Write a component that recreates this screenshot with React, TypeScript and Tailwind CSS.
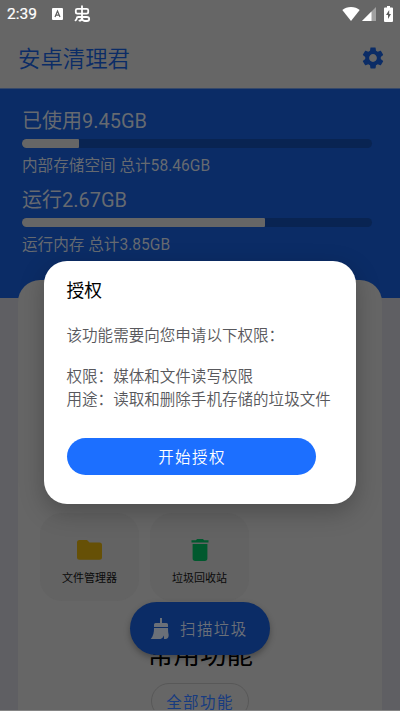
import React from "react";

function StatusBar() {
  return (
    <div className="flex h-7 items-center pl-[7px] pr-[7px] text-white">
      <span className="w-[31px] text-[15.5px] leading-7 [-webkit-text-stroke:0.2px_white]">2:39</span>
      <svg className="ml-[14px]" width="11" height="12" viewBox="0 0 11 12">
        <rect width="11" height="12" rx="1" fill="#fff" />
        <path d="M3 9 5.5 3 8 9M3.9 7.2H7.1" fill="none" stroke="#5c5c5c" strokeWidth="1.2" />
      </svg>
      <svg className="ml-[11px]" width="17" height="18" viewBox="0 0 17 18" fill="none" stroke="#fff" strokeWidth="1.8" strokeLinecap="round" strokeLinejoin="round">
        <path d="M3.4 3.8H12.6Q14.2 3.8 14.2 5.2V7Q14.2 8.6 12.6 8.6H3.4Q1.8 8.6 1.8 7V5.2Q1.8 3.8 3.4 3.8ZM8 1.2V12.5Q8 16 10.8 16H12.8Q15.2 16 15.2 14Q15.2 12 12.8 12H4.2Q2.8 12 2.8 13.2Q2.8 14.2 1.5 15.4M5.4 15.7Q7.6 15.5 8 13" />
      </svg>
      <div className="grow" />
      <svg width="18" height="14" viewBox="0 0 18 14">
        <path d="M9 14 0.3 3.1Q3.8 0 9 0T17.7 3.1Z" fill="#fff" />
      </svg>
      <svg className="ml-[2px]" width="14" height="14" viewBox="0 0 14 14">
        <path d="M14 0V14H0Z" fill="#a0a0a0" />
        <path d="M9.5 4.5V14H0Z" fill="#fff" />
      </svg>
      <svg className="ml-2" width="9" height="16" viewBox="0 0 9 16">
        <path d="M3 0H6V1.5H8Q9 1.5 9 2.5V15Q9 16 8 16H1Q0 16 0 15V2.5Q0 1.5 1 1.5H3Z" fill="#fff" />
        <path d="M5.2 4 2 9H4V13L7 8H5.2Z" fill="#5c5c5c" />
      </svg>
    </div>
  );
}

function GearIcon() {
  return (
    <svg width="26" height="26" viewBox="0 0 24 24" fill="#0b2c66">
      <path d="M19.14 12.94c.04-.3.06-.61.06-.94 0-.32-.02-.64-.07-.94l2.03-1.58c.18-.14.23-.41.12-.61l-1.92-3.32c-.12-.22-.37-.29-.59-.22l-2.39.96c-.5-.38-1.03-.7-1.62-.94l-.36-2.54c-.04-.24-.24-.41-.48-.41h-3.84c-.24 0-.43.17-.47.41l-.36 2.54c-.59.24-1.13.57-1.62.94l-2.39-.96c-.22-.08-.47 0-.59.22L2.74 8.87c-.12.21-.08.47.12.61l2.03 1.58c-.05.3-.09.63-.09.94s.02.64.07.94l-2.03 1.58c-.18.14-.23.41-.12.61l1.92 3.32c.12.22.37.29.59.22l2.39-.96c.5.38 1.03.7 1.62.94l.36 2.54c.05.24.24.41.48.41h3.84c.24 0 .44-.17.47-.41l.36-2.54c.59-.24 1.13-.56 1.62-.94l2.39.96c.22.08.47 0 .59-.22l1.92-3.32c.12-.22.07-.47-.12-.61l-2.01-1.58zM12 15.6c-1.98 0-3.6-1.62-3.6-3.6s1.62-3.6 3.6-3.6 3.6 1.62 3.6 3.6-1.62 3.6-3.6 3.6z" />
    </svg>
  );
}

function Meter({ title, detail, width }: { title: string; detail: string; width: number }) {
  return (
    <div className="h-[79px]">
      <div className="h-[31px] text-[20px] leading-[26px]">{title}</div>
      <div className="h-[9px] w-[350px] overflow-hidden rounded-full bg-[#092452]">
        <div className="h-full rounded-r-[1px] bg-[#666]" style={{ width }} />
      </div>
      <div className="mt-[7px] text-[15.6px] leading-[22px]">{detail}</div>
    </div>
  );
}

function Tile({ icon, label }: { icon: React.ReactNode; label: string }) {
  return (
    <div className="flex h-[88px] w-[99px] flex-col items-center rounded-[22px] bg-[#636363] pt-[22px]">
      <div className="flex h-[29px] items-center">{icon}</div>
      <div className="mt-[6px] text-[11px] leading-[17px] text-[#0a0a0a]">{label}</div>
    </div>
  );
}

export default function App() {
  return (
    <div className="relative flex h-[711px] w-[400px] flex-col overflow-hidden bg-[#5f5f63] font-[Roboto,'Noto_Sans_CJK_SC',sans-serif]">
      <header className="h-[89px] shrink-0 border-b border-[#35486a] bg-[#666]">
        <StatusBar />
        <div className="flex h-[60px] items-center justify-between pl-[18px] pr-[14px]">
          <h1 className="pt-px text-[22.4px] leading-[30px] font-[350] text-[#0b2c66]">安卓清理君</h1>
          <GearIcon />
        </div>
      </header>

      <section className="h-[209px] shrink-0 bg-[#0b2c66] pl-[22px] pt-[19px] text-[#666a70]">
        <Meter title="已使用9.45GB" detail="内部存储空间 总计58.46GB" width={57} />
        <Meter title="运行2.67GB" detail="运行内存 总计3.85GB" width={243} />
      </section>

      <main className="mx-[18px] -mt-[18px] h-[431px] shrink-0 rounded-t-[22px] bg-[#666] pt-[233px]">
        <div className="flex gap-[11px] pl-[22px]">
          <Tile
            label="文件管理器"
            icon={
              <svg width="25" height="20" viewBox="0 0 25 20">
                <path d="M2.5 0H10L12.5 2.4H22.5Q25 2.4 25 4.9V17.3Q25 19.8 22.5 19.8H2.5Q0 19.8 0 17.3V2.5Q0 0 2.5 0Z" fill="#665006" />
              </svg>
            }
          />
          <Tile
            label="垃圾回收站"
            icon={
              <svg width="18" height="22" viewBox="0 0 18 22">
                <path d="M.5 1.2H5L6 0H12L13 1.2H17.5V3.6H.5ZM1.6 5H16.4V19.3Q16.4 22 13.8 22H4.2Q1.6 22 1.6 19.3Z" fill="#00592e" />
              </svg>
            }
          />
        </div>
        <h2 className="mt-[37px] text-center text-[26.5px] leading-[34px] text-black">常用功能</h2>
        <div className="mx-auto mt-[11px] h-[36px] w-[98px] rounded-full border border-[#585858] text-center text-[15.5px] leading-[38px] tracking-[1.4px] text-[#173b80]">
          全部功能
        </div>
      </main>

      <button className="absolute left-[130px] top-[602px] flex h-[53px] w-[140px] items-center rounded-full bg-[#0b2c66] pl-[20px] text-[15.5px] tracking-[1.4px] text-[#6b7078] shadow-[0_3px_6px_rgba(0,0,0,0.3)]">
        <svg className="mr-[11px]" width="19" height="22" viewBox="0 0 19 22" fill="#6b7078">
          <path d="M10 0H12V5H16.5Q18 5 18 6.5V9H4V6.5Q4 5 5.5 5H10ZM4 10H18Q18 15 18.7 17Q18.7 20.5 16 21H14V17.5Q12.7 20.4 10.5 21H.7Q4.3 17 4 10Z" />
        </svg>
        <span className="pt-[5px] font-[350]">扫描垃圾</span>
      </button>

      <div role="dialog" className="absolute left-[44px] top-[261px] h-[242.5px] w-[312px] rounded-[23px] bg-white px-[22.5px] pt-[17px] shadow-[0_8px_24px_rgba(0,0,0,0.25)]">
        <h3 className="text-[17.8px] leading-[26px] text-black">授权</h3>
        <div className="mt-[21px] whitespace-nowrap text-[15.55px] leading-[23px] font-[350] text-[#58585c]">
          <p>该功能需要向您申请以下权限：</p>
          <p className="mt-[18px]">权限：媒体和文件读写权限</p>
          <p>用途：读取和删除手机存储的垃圾文件</p>
        </div>
        <button className="mt-[26px] block h-[37px] w-[249px] rounded-full bg-[#1c6fff] pt-[4px] pl-[2px] text-center text-[15.5px] font-[350] tracking-[1.4px] text-white">
          开始授权
        </button>
      </div>

      <div className="absolute bottom-0 h-px w-full bg-[#858585]" />
    </div>
  );
}
